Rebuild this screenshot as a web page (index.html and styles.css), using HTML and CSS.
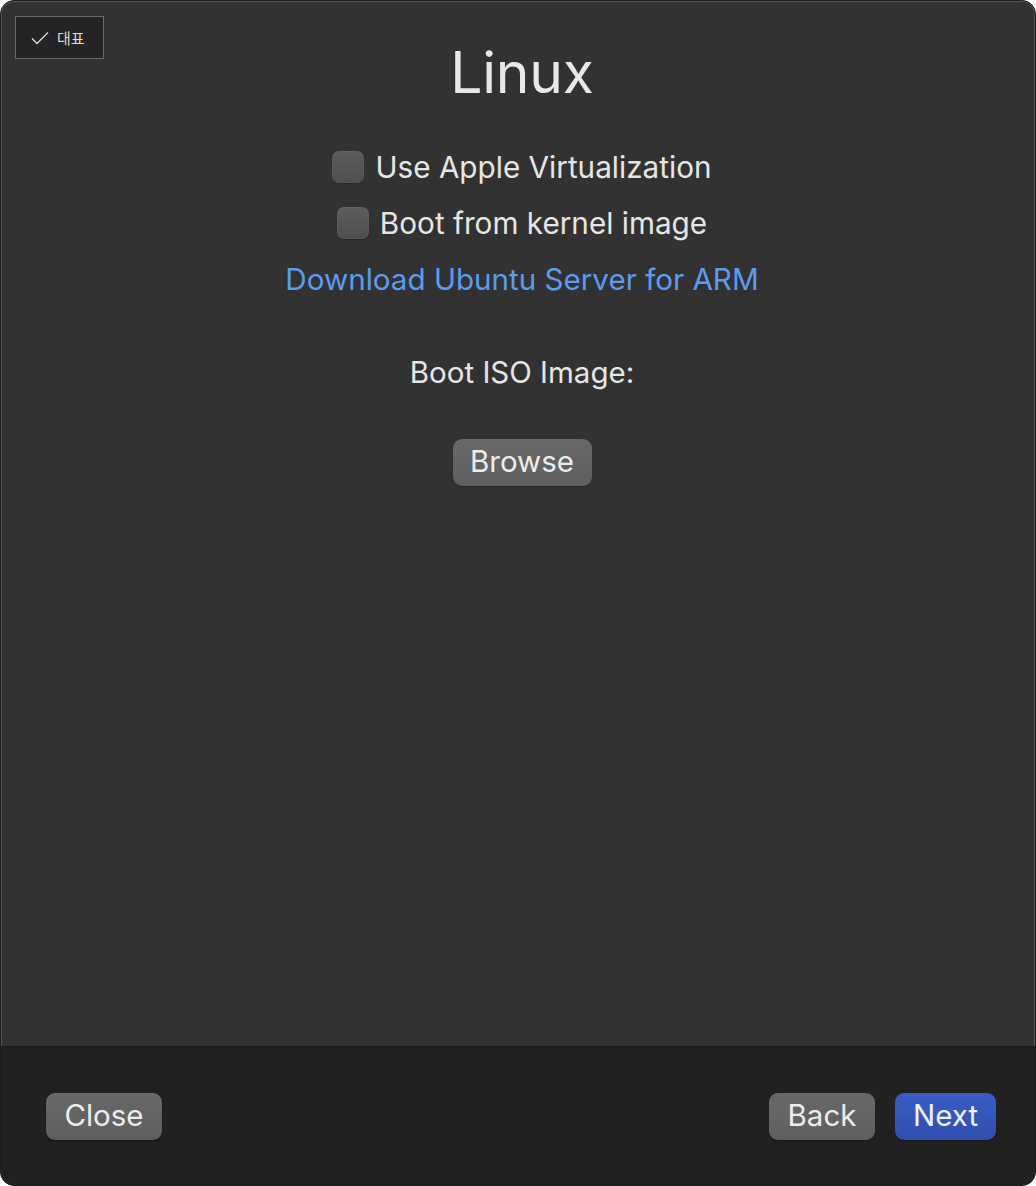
FILE: index.html
```html
<!DOCTYPE html>
<html lang="ko">
<head>
<meta charset="utf-8">
<title>Linux</title>
<link rel="stylesheet" href="styles.css">
</head>
<body>
<div class="window">
  <div class="badge">
    <svg class="badge-check" width="18" height="14" viewBox="0 0 18 14"><path d="M1 7.5 L6 12.5 L17 1.5" fill="none" stroke="#d8d8d8" stroke-width="1.3"/></svg>
    <span>대표</span>
  </div>
  <main class="content">
    <h1 class="title">Linux</h1>
    <label class="check-row first">
      <span class="box"></span>
      <span class="check-text">Use Apple Virtualization</span>
    </label>
    <label class="check-row">
      <span class="box"></span>
      <span class="check-text">Boot from kernel image</span>
    </label>
    <a class="link" href="#">Download Ubuntu Server for ARM</a>
    <div class="label">Boot ISO Image:</div>
    <button class="btn browse">Browse</button>
  </main>
  <footer class="footer">
    <button class="btn close">Close</button>
    <div class="right">
      <button class="btn back">Back</button>
      <button class="btn next">Next</button>
    </div>
  </footer>
</div>
</body>
</html>
```
FILE: styles.css
```css
* { box-sizing: border-box; }
html, body { margin: 0; padding: 0; background: #ffffff; }
body { width: 1036px; height: 1186px; overflow: hidden; }

.window {
  position: relative;
  width: 1036px;
  height: 1186px;
  background: #323232;
  border-radius: 14px;
  border: 1px solid #1c1c1c;
  box-shadow: inset 0 0 0 1px #575757;
  display: flex;
  flex-direction: column;
  overflow: hidden;
  font-family: Inter, "Liberation Sans", sans-serif;
  color: #e4e4e4;
}

.badge {
  position: absolute;
  left: 14px;
  top: 15px;
  width: 89px;
  height: 43px;
  border: 1px solid #6a6a6a;
  background: #242424;
  display: flex;
  align-items: center;
  padding-left: 15px;
  gap: 8px;
  font-family: "Noto Sans CJK KR", sans-serif;
  font-size: 15px;
  color: #dcdcdc;
}
.badge-check { display: block; }

.content {
  flex: 1;
  display: flex;
  flex-direction: column;
  align-items: center;
  padding-top: 37px;
  padding-left: 8px;
}

.title {
  margin: 0;
  height: 70px;
  line-height: 70px;
  font-size: 57px;
  font-weight: 400;
  color: #e8e8e8;
  letter-spacing: -0.2px;
}

.check-row {
  display: flex;
  align-items: center;
  gap: 11px;
  height: 40px;
  margin-top: 16px;
}
.check-row.first { margin-top: 39px; }

.box {
  width: 32px;
  height: 32px;
  border-radius: 7px;
  background: linear-gradient(#5d5d5d, #4e4e4e);
  box-shadow: inset 0 0 0 1px rgba(255,255,255,0.04), 0 1px 1px rgba(0,0,0,0.25);
}

.check-text {
  font-size: 29.7px;
  line-height: 40px;
  color: #e6e6e6;
}

.link {
  margin-top: 16px;
  height: 40px;
  line-height: 40px;
  font-size: 29.6px;
  color: #5b9cf0;
  text-decoration: none;
}

.label {
  margin-top: 53px;
  height: 40px;
  line-height: 40px;
  font-size: 29.5px;
  color: #e6e6e6;
}

.btn {
  font-family: Inter, "Liberation Sans", sans-serif;
  font-size: 29.5px;
  color: #ececec;
  border: none;
  border-radius: 9px;
  height: 47px;
  padding: 0 0 3px 0;
  background: linear-gradient(#686868, #5f5f5f);
  box-shadow: 0 1px 1px rgba(0,0,0,0.3);
  cursor: pointer;
}

.browse {
  margin-top: 47px;
  width: 139px;
}

.footer {
  height: 139px;
  flex: none;
  background: #212121;
  border-top: 1px solid #1a1a1a;
  display: flex;
  justify-content: space-between;
  align-items: flex-start;
  padding: 46px 39px 0 45px;
}

.right { display: flex; gap: 20px; }

.close { width: 116px; }
.back { width: 106px; }
.next {
  width: 101px;
  background: linear-gradient(#3a5cc4, #2f4fae);
  color: #eef0ff;
}
```
